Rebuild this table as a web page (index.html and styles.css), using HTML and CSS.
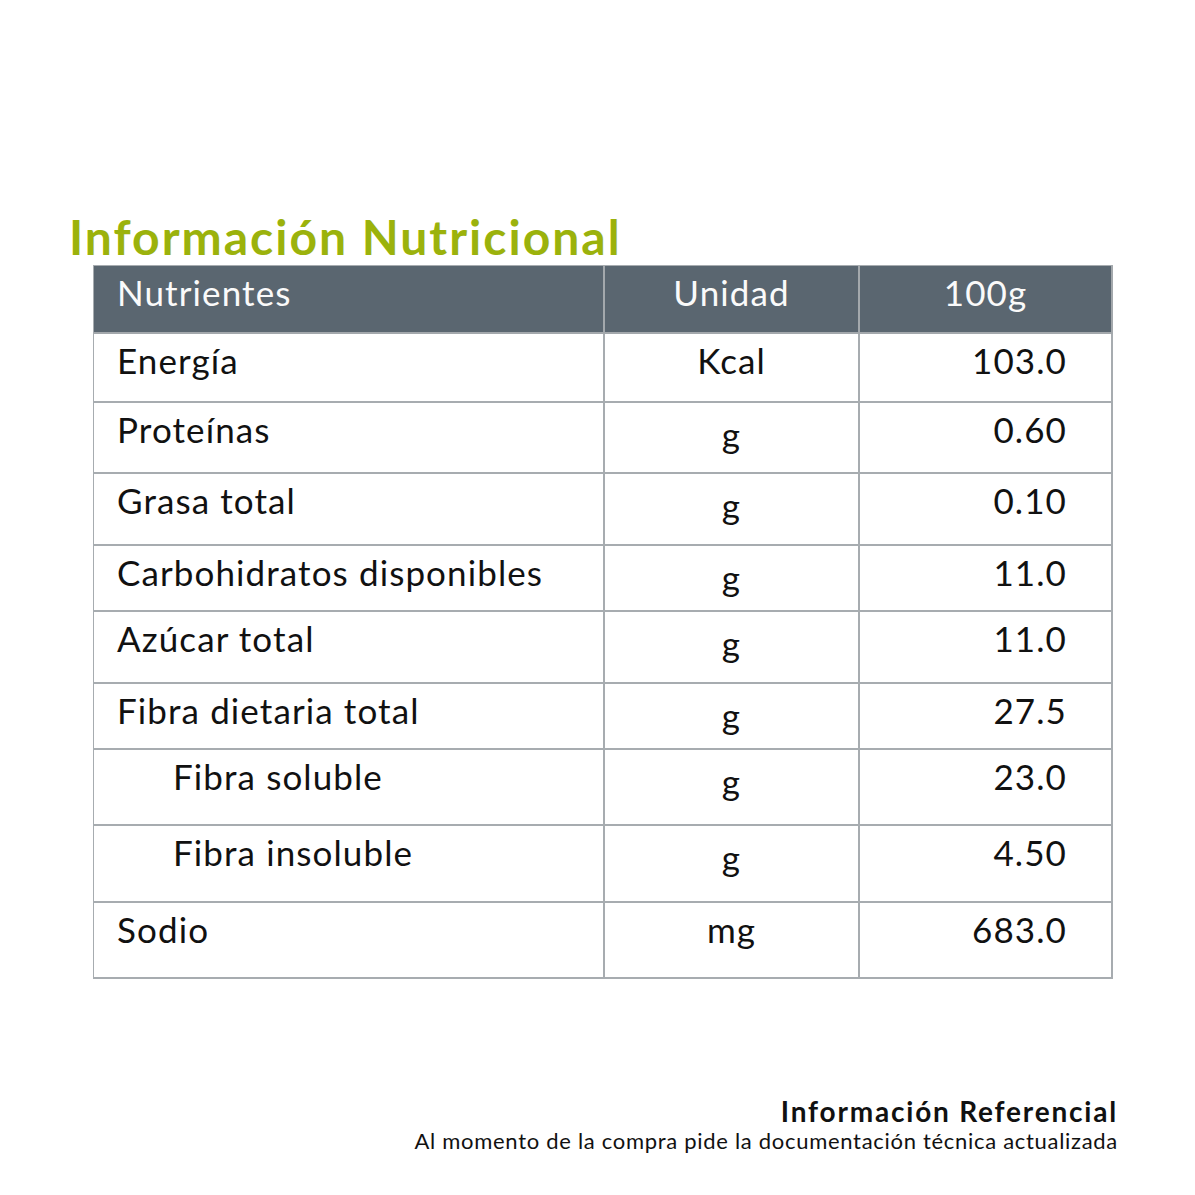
FILE: index.html
```
<!DOCTYPE html>
<html lang="es">
<head>
  <meta charset="UTF-8">
  <title>Información Nutricional</title>
  <link rel="stylesheet" href="styles.css">
</head>
<body>
  <div class="page">
    <h1 class="title">Información Nutricional</h1>
    <div class="table">
      <div class="cell head name">Nutrientes</div>
      <div class="cell head unit">Unidad</div>
      <div class="cell head unit">100g</div>

      <div class="cell name">Energía</div>
      <div class="cell unit">Kcal</div>
      <div class="cell value">103.0</div>

      <div class="cell name">Proteínas</div>
      <div class="cell unit low">g</div>
      <div class="cell value">0.60</div>

      <div class="cell name">Grasa total</div>
      <div class="cell unit low">g</div>
      <div class="cell value">0.10</div>

      <div class="cell name">Carbohidratos disponibles</div>
      <div class="cell unit low">g</div>
      <div class="cell value">11.0</div>

      <div class="cell name">Azúcar total</div>
      <div class="cell unit low">g</div>
      <div class="cell value">11.0</div>

      <div class="cell name">Fibra dietaria total</div>
      <div class="cell unit low">g</div>
      <div class="cell value">27.5</div>

      <div class="cell name sub">Fibra soluble</div>
      <div class="cell unit low">g</div>
      <div class="cell value">23.0</div>

      <div class="cell name sub">Fibra insoluble</div>
      <div class="cell unit low">g</div>
      <div class="cell value">4.50</div>

      <div class="cell name">Sodio</div>
      <div class="cell unit">mg</div>
      <div class="cell value">683.0</div>
    </div>
    <div class="note">
      <div class="note-title">Información Referencial</div>
      <div class="note-text">Al momento de la compra pide la documentación técnica actualizada</div>
    </div>
  </div>
</body>
</html>
```

FILE: styles.css
```
body {
  margin: 0;
  padding: 0;
  background-color: #ffffff;
  font-family: Lato, "Open Sans", sans-serif;
  color: #111;
}

.page {
  width: 1195px;
  height: 1195px;
  padding-top: 210px;
  box-sizing: border-box;
}

.title {
  margin: 0 0 0 69px;
  font-size: 48px;
  font-weight: 700;
  line-height: 54px;
  color: #9bb20c;
  letter-spacing: 2px;
}

.table {
  display: grid;
  grid-template-columns: 511px 255px 253px;
  grid-template-rows: 68px 69px 71px 72px 66px 72px 66px 76px 77px 76px;
  margin: 1px 0 0 93px;
  width: 1019px;
  border-top: 1px solid #a7acb0;
  border-left: 1px solid #a7acb0;
}

.cell {
  border-right: 2px solid #a7acb0;
  border-bottom: 2px solid #a7acb0;
  font-size: 35px;
  line-height: 40px;
  letter-spacing: 1.1px;
  padding-top: 6px;
  box-sizing: border-box;
}

.head {
  background-color: #5a6670;
  color: #fafafa;
  border-right-color: #a3a8ac;
  border-bottom-color: #a3a8ac;
}

.name {
  padding-left: 23px;
}

.sub {
  padding-left: 79px;
}

.unit {
  text-align: center;
}

.low {
  padding-top: 11px;
}

.value {
  text-align: right;
  padding-right: 44px;
}

.note {
  margin: 116px 77px 0 0;
  text-align: right;
}

.note-title {
  font-size: 28px;
  font-weight: 700;
  line-height: 32px;
  letter-spacing: 1.8px;
}

.note-text {
  font-size: 22px;
  line-height: 28px;
  letter-spacing: 0.7px;
}
```
